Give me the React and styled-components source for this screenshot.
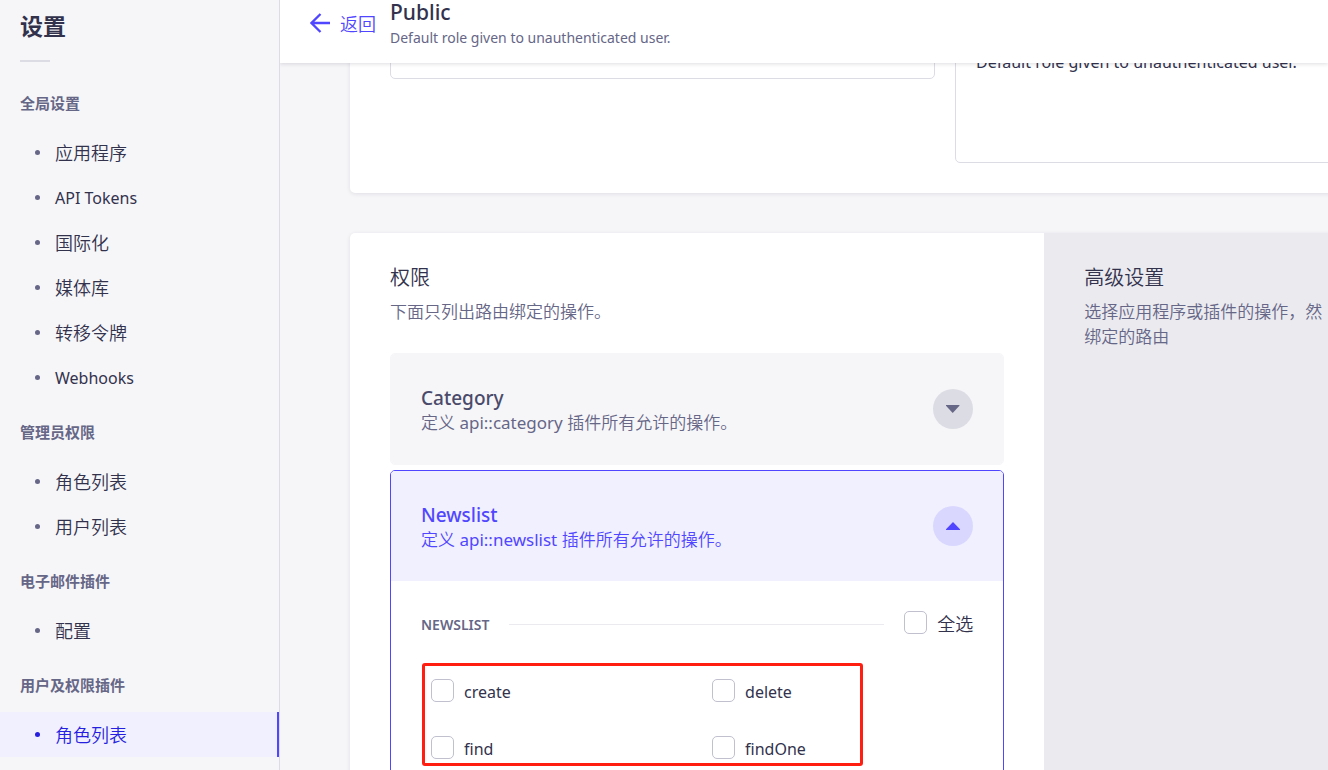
import React, { useState } from 'react';
import styled, { createGlobalStyle } from 'styled-components';

const GlobalStyle = createGlobalStyle`
  * {
    box-sizing: border-box;
  }
  body {
    margin: 0;
    background: #f6f6f9;
    color: #32324d;
    font-family: "Noto Sans", "Noto Sans CJK SC", sans-serif;
    font-size: 17px;
    line-height: 25px;
  }
  h1, h2, h3, p, ul {
    margin: 0;
    padding: 0;
  }
  button, input, textarea {
    font: inherit;
    color: inherit;
  }
`;

const Layout = styled.div`
  display: flex;
  height: 100vh;
  overflow: hidden;
`;

const SideNav = styled.nav`
  flex: 0 0 280px;
  padding-top: 11px;
  background: #f6f6f9;
  border-right: 1px solid #dcdce4;
`;

const SideTitle = styled.h1`
  padding-left: 20px;
  font-size: 23px;
  line-height: 30px;
  font-weight: 700;
`;

const SideDivider = styled.hr`
  width: 30px;
  height: 2px;
  margin: 19px 0 9px 20px;
  border: none;
  background: #dcdce4;
`;

const SectionLabel = styled.h2`
  padding: 21px 20px 16px;
  color: #666687;
  font-size: 15px;
  line-height: 22px;
  font-weight: 700;
`;

const NavList = styled.ul`
  list-style: none;
`;

const NavLink = styled.a`
  display: flex;
  align-items: center;
  gap: 15px;
  height: 45px;
  padding: 2px 0 0 35px;
  color: ${({ $active }) => ($active ? '#271fe0' : '#32324d')};
  background: ${({ $active }) => ($active ? '#f0f0ff' : 'transparent')};
  border-right: ${({ $active }) => ($active ? '2px solid #5146ff' : 'none')};
  font-size: ${({ $latin }) => ($latin ? '16px' : '18px')};
  font-weight: ${({ $latin }) => ($latin ? 400 : 350)};
  text-decoration: none;

  &::before {
    content: '';
    width: 5px;
    height: 5px;
    margin-bottom: 2px;
    border-radius: 50%;
    background: ${({ $active }) => ($active ? '#271fe0' : '#666687')};
  }
`;

const Main = styled.main`
  flex: 1;
  min-width: 0;
  overflow: hidden;
`;

const Header = styled.header`
  position: relative;
  z-index: 2;
  display: flex;
  gap: 14px;
  height: 63px;
  padding-left: 30px;
  background: #fff;
  box-shadow: 0 1px 4px rgba(33, 33, 52, 0.15);
`;

const BackLink = styled.a`
  display: flex;
  align-items: center;
  gap: 10px;
  height: 48px;
  color: #5146ff;
  font-size: 18px;
  font-weight: 350;
  text-decoration: none;

  svg {
    margin-bottom: 2px;
  }
`;

const RoleName = styled.h2`
  font-size: 21px;
  line-height: 24px;
  font-weight: 500;
`;

const RoleDescription = styled.p`
  margin-top: 1px;
  color: #666687;
  font-size: 14px;
`;

const Content = styled.div`
  min-width: 1330px;
  margin-top: -53px;
  padding: 0 70px;
`;

const DetailsCard = styled.section`
  display: grid;
  grid-template-columns: 1fr 1fr;
  align-items: start;
  gap: 20px;
  margin-bottom: 40px;
  padding: 19px 40px 30px;
  background: #fff;
  border-radius: 5px;
  box-shadow: 0 1px 4px rgba(33, 33, 52, 0.1);
`;

const TextInput = styled.input`
  width: 100%;
  height: 50px;
  padding: 0 20px;
  background: #fff;
  border: 1px solid #dcdce4;
  border-radius: 5px;
`;

const TextArea = styled.textarea`
  display: block;
  width: 100%;
  height: 134px;
  padding: 20px;
  background: #fff;
  border: 1px solid #dcdce4;
  border-radius: 5px;
  font-size: 16px;
  resize: none;
`;

const PermissionsCard = styled.section`
  display: grid;
  grid-template-columns: 7fr 5fr;
  background: #fff;
  border-radius: 5px;
  box-shadow: 0 1px 4px rgba(33, 33, 52, 0.1);
`;

const Permissions = styled.div`
  padding: 30px 40px;
`;

const Advanced = styled.aside`
  padding: 30px 40px;
  background: #eaeaef;
`;

const PanelTitle = styled.h2`
  margin-bottom: 7px;
  font-size: 20px;
  line-height: 29px;
  font-weight: 350;
`;

const PanelText = styled.p`
  color: #666687;
  font-weight: 350;
`;

const Accordions = styled.div`
  display: grid;
  gap: 5px;
  margin-top: 29px;
`;

const Accordion = styled.div`
  overflow: hidden;
  border: 1px solid ${({ $open }) => ($open ? '#5146ff' : '#f6f6f9')};
  border-radius: 5px;
`;

const AccordionHead = styled.button`
  display: flex;
  align-items: center;
  justify-content: space-between;
  width: 100%;
  height: 110px;
  padding: 0 30px;
  border: none;
  background: ${({ $open }) => ($open ? '#f0f0ff' : '#f6f6f9')};
  color: ${({ $open }) => ($open ? '#5146ff' : '#666687')};
  font-weight: 350;
  text-align: left;
  cursor: pointer;
`;

const AccordionText = styled.span`
  padding-top: 2px;
`;

const AccordionName = styled.span`
  display: block;
  color: ${({ $open }) => ($open ? '#5146ff' : '#4a4a6a')};
  font-size: 19px;
  line-height: 24px;
  font-weight: 500;
`;

const ApiName = styled.span`
  font-weight: 400;
`;

const AccordionIcon = styled.span`
  display: grid;
  place-items: center;
  width: 40px;
  height: 40px;
  border-radius: 50%;
  background: ${({ $open }) => ($open ? '#dad7ff' : '#dcdce4')};
`;

const AccordionBody = styled.div`
  padding: 30px;
`;

const GroupHead = styled.div`
  display: flex;
  align-items: center;
  gap: 20px;
`;

const GroupName = styled.h3`
  color: #666687;
  font-size: 14px;
  font-weight: 600;
  text-transform: uppercase;
`;

const GroupLine = styled.div`
  flex: 1;
  height: 1px;
  background: #eaeaef;
`;

const CheckLabel = styled.label`
  display: flex;
  align-items: center;
  gap: 10px;
  font-size: ${({ $large }) => ($large ? '18px' : '16px')};
  font-weight: ${({ $large }) => ($large ? 350 : 400)};
`;

const Checkbox = styled.input`
  appearance: none;
  width: 23px;
  height: 23px;
  margin: 0 0 3px;
  background: #fff;
  border: 1px solid #c0c0cf;
  border-radius: 5px;

  &:checked {
    background: #5146ff;
    border-color: #5146ff;
  }
`;

const ActionGrid = styled.div`
  position: relative;
  display: grid;
  grid-template-columns: 1fr 1fr;
  gap: 31px 30px;
  margin-top: 26px;
  padding: 16px 10px;
`;

const Highlight = styled.div`
  position: absolute;
  top: 0;
  bottom: 12px;
  left: 1px;
  right: 110px;
  border: 3px solid #ff1e10;
  border-radius: 3px;
  pointer-events: none;
`;

const sections = [
  {
    title: '全局设置',
    items: ['应用程序', 'API Tokens', '国际化', '媒体库', '转移令牌', 'Webhooks'],
  },
  { title: '管理员权限', items: ['角色列表', '用户列表'] },
  { title: '电子邮件插件', items: ['配置'] },
  { title: '用户及权限插件', items: ['角色列表'], active: true },
];

const actions = ['create', 'delete', 'find', 'findOne'];

function ArrowLeft() {
  return (
    <svg width="20" height="20" viewBox="0 0 20 20" fill="none" aria-hidden="true">
      <path d="M20 10H2M10.5 1L1.5 10L10.5 19" stroke="currentColor" strokeWidth="2.3" />
    </svg>
  );
}

function Caret({ open }) {
  return (
    <svg width="14" height="8" viewBox="0 0 14 8" aria-hidden="true">
      <path d={open ? 'M7 0L14 7.2V8H0V7.2Z' : 'M0 0H13.4V0.8L6.7 8L0 0.8Z'} fill="currentColor" />
    </svg>
  );
}

function PermissionAccordion({ name, open, onToggle, children }) {
  return (
    <Accordion $open={open}>
      <AccordionHead type="button" $open={open} aria-expanded={open} onClick={onToggle}>
        <AccordionText>
          <AccordionName $open={open}>{name}</AccordionName>
          定义 <ApiName>api::{name.toLowerCase()}</ApiName> 插件所有允许的操作。
        </AccordionText>
        <AccordionIcon $open={open}>
          <Caret open={open} />
        </AccordionIcon>
      </AccordionHead>
      {open ? <AccordionBody>{children}</AccordionBody> : null}
    </Accordion>
  );
}

function App() {
  const [opened, setOpened] = useState('Newslist');
  const [checked, setChecked] = useState([]);
  const [description, setDescription] = useState('Default role given to unauthenticated user.');

  const toggleOpened = name => setOpened(opened === name ? '' : name);
  const toggleAction = action =>
    setChecked(
      checked.includes(action) ? checked.filter(it => it !== action) : [...checked, action]
    );
  const allChecked = checked.length === actions.length;

  return (
    <Layout>
      <GlobalStyle />
      <SideNav>
        <SideTitle>设置</SideTitle>
        <SideDivider />
        {sections.map(section => (
          <div key={section.title}>
            <SectionLabel>{section.title}</SectionLabel>
            <NavList>
              {section.items.map(item => (
                <li key={item}>
                  <NavLink href="#" $active={section.active} $latin={/^[A-Z]/.test(item)}>
                    {item}
                  </NavLink>
                </li>
              ))}
            </NavList>
          </div>
        ))}
      </SideNav>
      <Main>
        <Header>
          <BackLink href="#">
            <ArrowLeft />
            返回
          </BackLink>
          <div>
            <RoleName>Public</RoleName>
            <RoleDescription>Default role given to unauthenticated user.</RoleDescription>
          </div>
        </Header>
        <Content>
          <DetailsCard>
            <TextInput aria-label="名称" />
            <TextArea
              aria-label="描述"
              value={description}
              onChange={e => setDescription(e.target.value)}
            />
          </DetailsCard>
          <PermissionsCard>
            <Permissions>
              <PanelTitle>权限</PanelTitle>
              <PanelText>下面只列出路由绑定的操作。</PanelText>
              <Accordions>
                <PermissionAccordion
                  name="Category"
                  open={opened === 'Category'}
                  onToggle={() => toggleOpened('Category')}
                />
                <PermissionAccordion
                  name="Newslist"
                  open={opened === 'Newslist'}
                  onToggle={() => toggleOpened('Newslist')}
                >
                  <GroupHead>
                    <GroupName>Newslist</GroupName>
                    <GroupLine />
                    <CheckLabel $large>
                      <Checkbox
                        type="checkbox"
                        checked={allChecked}
                        onChange={() => setChecked(allChecked ? [] : actions)}
                      />
                      全选
                    </CheckLabel>
                  </GroupHead>
                  <ActionGrid>
                    {actions.map(action => (
                      <CheckLabel key={action}>
                        <Checkbox
                          type="checkbox"
                          checked={checked.includes(action)}
                          onChange={() => toggleAction(action)}
                        />
                        {action}
                      </CheckLabel>
                    ))}
                    <Highlight />
                  </ActionGrid>
                </PermissionAccordion>
              </Accordions>
            </Permissions>
            <Advanced>
              <PanelTitle>高级设置</PanelTitle>
              <PanelText>
                选择应用程序或插件的操作，然
                <br />
                绑定的路由
              </PanelText>
            </Advanced>
          </PermissionsCard>
        </Content>
      </Main>
    </Layout>
  );
}

export default App;
